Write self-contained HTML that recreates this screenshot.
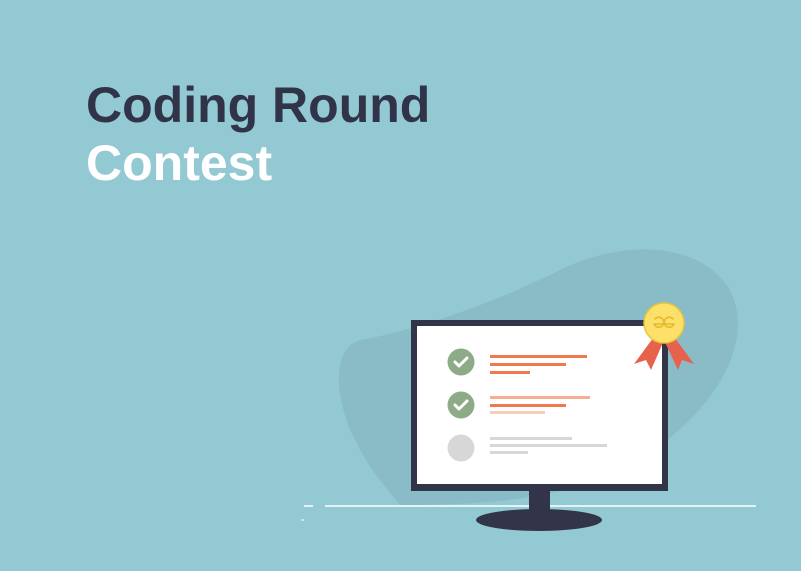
<!DOCTYPE html>
<html><head><style>
html,body{margin:0;padding:0}
body{width:801px;height:571px;background:#93c9d2;position:relative;overflow:hidden;font-family:"Liberation Sans",sans-serif}
h1{position:absolute;left:86px;top:76px;margin:0;font-size:50px;line-height:58px;font-weight:bold;color:#313449;letter-spacing:0px}
h1 span{color:#fff;display:block}
svg{position:absolute;left:0;top:0}
</style></head><body>
<svg width="801" height="571" viewBox="0 0 801 571">
<path d="M360 340 C420 330 500 300 560 270 C620 240 700 240 730 290 C760 350 700 430 620 470 C560 500 480 505 400 505 C380 480 370 470 355 440 C335 400 330 350 360 340 Z" fill="#89bcc6"/>
<line x1="325" y1="506" x2="756" y2="506" stroke="#fff" stroke-width="1.5"/>
<line x1="304" y1="506" x2="313" y2="506" stroke="#fff" stroke-width="1.5"/>
<line x1="301" y1="520" x2="304" y2="520" stroke="#fff" stroke-width="1"/>
<rect x="529" y="489" width="21" height="24" fill="#323449"/>
<ellipse cx="539" cy="520" rx="63" ry="11" fill="#323449"/>
<rect x="411" y="320" width="257" height="171" fill="#323449"/>
<rect x="417" y="326" width="245" height="158" fill="#fff"/>
<circle cx="461" cy="362" r="13.5" fill="#8eab88"/>
<path d="M455 362 l4 4 l8 -8" stroke="#fff" stroke-width="3" fill="none" stroke-linecap="round" stroke-linejoin="round"/>
<circle cx="461" cy="405" r="13.5" fill="#8eab88"/>
<path d="M455 405 l4 4 l8 -8" stroke="#fff" stroke-width="3" fill="none" stroke-linecap="round" stroke-linejoin="round"/>
<circle cx="461" cy="448" r="13.5" fill="#d7d7d7"/>
<rect x="490" y="355" width="97" height="3" fill="#f07a4e"/>
<rect x="490" y="363" width="76" height="3" fill="#f07a4e"/>
<rect x="490" y="371" width="40" height="3" fill="#f07a4e"/>
<rect x="490" y="396" width="100" height="3" fill="#f6ad94"/>
<rect x="490" y="404" width="76" height="3" fill="#f07a4e"/>
<rect x="490" y="411" width="55" height="3" fill="#f9cbbb"/>
<rect x="490" y="437" width="82" height="3" fill="#d7d7d7"/>
<rect x="490" y="444" width="117" height="3" fill="#d7d7d7"/>
<rect x="490" y="451" width="38" height="3" fill="#d7d7d7"/>
<path d="M656 334 L634 364 L646 360 L651 370 L665 338 Z" fill="#e7624c"/>
<path d="M672 334 L694 364 L682 360 L678 370 L663 338 Z" fill="#e7624c"/>
<circle cx="664" cy="323" r="20" fill="#fde06a" stroke="#eac43b" stroke-width="1.5"/>
<path d="M654.5 319.5 A5 5 0 1 1 654 324 H674 A5 5 0 1 1 673.5 319.5" stroke="#e6b92e" stroke-width="1.6" fill="none"/>
</svg>
<h1>Coding Round<span>Contest</span></h1>
</body></html>
